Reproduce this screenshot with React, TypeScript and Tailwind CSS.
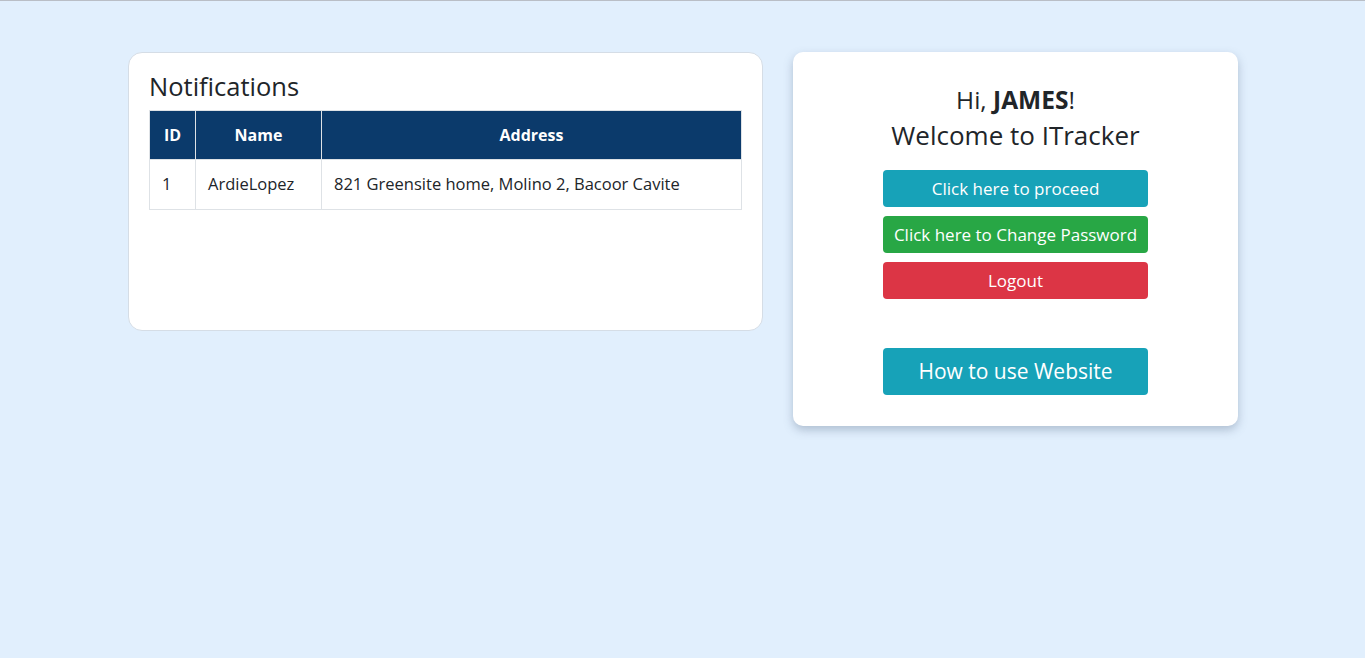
const rows = [
  { id: 1, name: "ArdieLopez", address: "821 Greensite home, Molino 2, Bacoor Cavite" },
];

const font = { fontFamily: '"Open Sans", "Noto Sans", sans-serif' };

export default function App() {
  return (
    <div
      style={font}
      className="min-h-[658px] border-t border-[#b9bec6] bg-[#e1effd] text-[#212529]"
    >
      <div className="flex items-start gap-[30px] pl-[128px] pt-[51px]">
        {/* Notifications card */}
        <div className="h-[279px] w-[635px] rounded-[14px] border border-[#d5dde6] bg-white px-[20px] pt-[17px]">
          <h2 className="text-[25.5px] leading-[32px]">Notifications</h2>
          <table className="mt-[8px] w-full border-collapse text-[16.5px]">
            <thead>
              <tr className="h-[49px] bg-[#0b3a6b] text-[16px] text-white">
                <th className="w-[46px] border border-[#dee2e6] font-bold">ID</th>
                <th className="w-[126px] border border-[#dee2e6] font-bold">Name</th>
                <th className="border border-[#dee2e6] font-bold">Address</th>
              </tr>
            </thead>
            <tbody>
              {rows.map((r) => (
                <tr key={r.id} className="h-[50px]">
                  <td className="border border-[#dee2e6] px-[12px]">{r.id}</td>
                  <td className="border border-[#dee2e6] px-[12px]">{r.name}</td>
                  <td className="border border-[#dee2e6] px-[12px]">{r.address}</td>
                </tr>
              ))}
            </tbody>
          </table>
        </div>

        {/* Welcome card */}
        <div className="flex h-[374px] w-[445px] flex-col items-center rounded-[10px] bg-white pt-[33px] shadow-[0_4px_10px_rgba(80,100,130,0.35)]">
          <p className="text-[24.5px] leading-[30px]">
            Hi, <span className="font-bold">JAMES</span>!
          </p>
          <p className="mt-[5px] text-[26px] leading-[30px]">Welcome to ITracker</p>
          <div className="mt-[20px] flex w-[265px] flex-col gap-[9px] text-[17px] text-white">
            <button className="h-[37px] rounded-[4px] bg-[#17a2b8]">Click here to proceed</button>
            <button className="h-[37px] whitespace-nowrap rounded-[4px] bg-[#28a745]">
              Click here to Change Password
            </button>
            <button className="h-[37px] rounded-[4px] bg-[#dc3545]">Logout</button>
          </div>
          <button className="mt-[49px] h-[47px] w-[265px] rounded-[4px] bg-[#17a2b8] text-[21px] text-white">
            How to use Website
          </button>
        </div>
      </div>
    </div>
  );
}
